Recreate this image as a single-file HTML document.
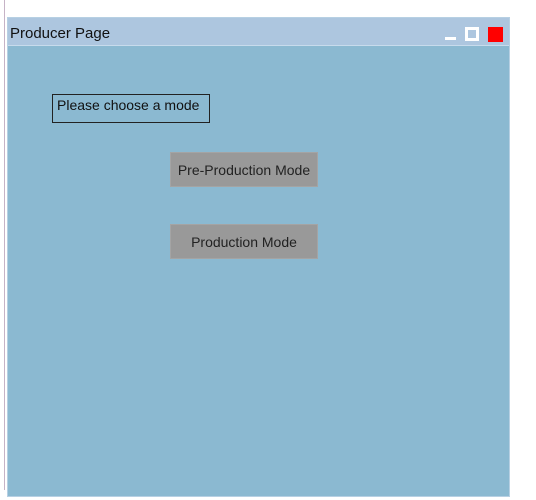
<!DOCTYPE html>
<html><head><style>
body{margin:0;width:536px;height:500px;background:#fff;position:relative;overflow:hidden;font-family:"Liberation Sans",Arial,sans-serif;}
.l{position:absolute;left:4px;top:0;width:1px;height:490px;background:#c6b3c6;}
.w{position:absolute;left:7px;top:17px;width:501px;height:478px;background:#8bb9d1;border:1px solid #b7d0e3;}
.t{position:absolute;left:0;top:0;width:501px;height:27px;background:#adc6df;border-bottom:1px solid #c8dbec;}
.t span{position:absolute;left:2px;top:7px;font-size:15px;color:#111;}
.mn{position:absolute;left:437px;top:19px;width:11px;height:3px;background:#fff;}
.mx{position:absolute;left:457px;top:9px;width:8px;height:8px;border:3px solid #fff;background:#adc6df;}
.cl{position:absolute;left:480px;top:9px;width:15px;height:15px;background:#f00;}
.lb{position:absolute;left:44px;top:76px;width:158px;height:29px;border:1px solid #222;font-size:14px;color:#111;box-sizing:border-box;padding:2px 0 0 4px;}
.b{position:absolute;left:162px;width:148px;height:35px;background:#999;border:1px solid #a4a4a4;box-sizing:border-box;font-size:14px;color:#222;text-align:center;line-height:35px;}
</style></head><body>
<div class="l"></div>
<div class="w">
<div class="t"><span>Producer Page</span><div class="mn"></div><div class="mx"></div><div class="cl"></div></div>
<div class="lb">Please choose a mode</div>
<div class="b" style="top:134px">Pre-Production Mode</div>
<div class="b" style="top:206px">Production Mode</div>
</div>
</body></html>
